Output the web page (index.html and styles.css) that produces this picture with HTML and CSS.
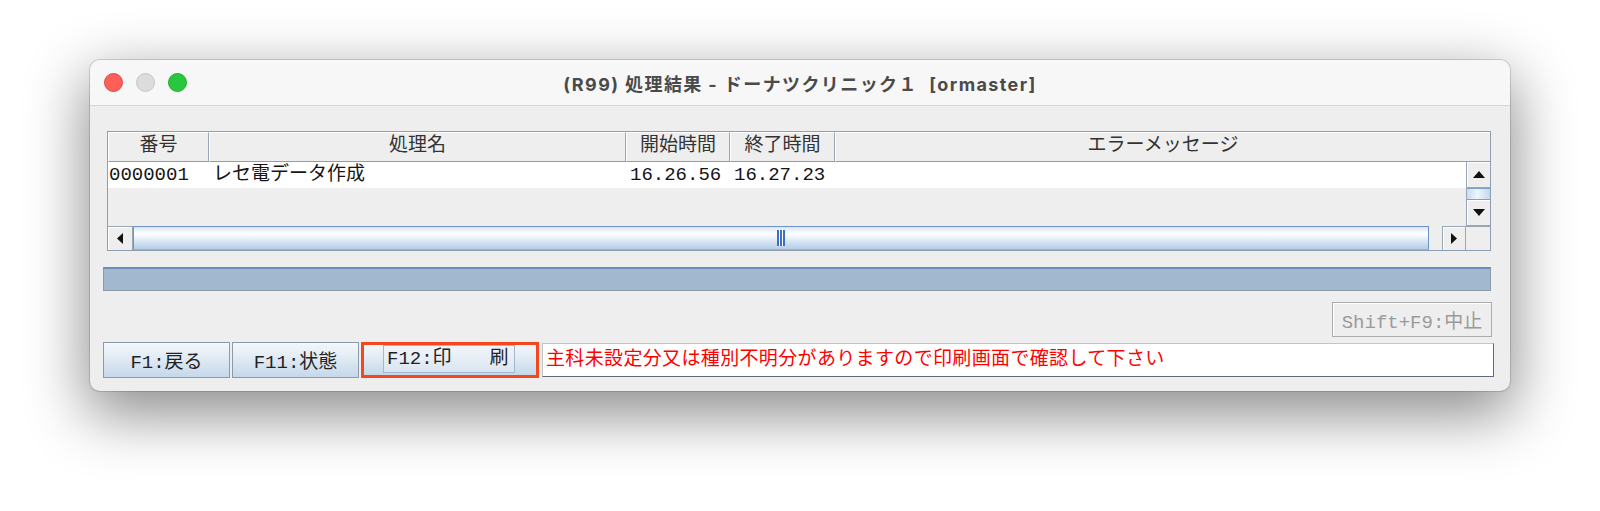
FILE: index.html
```html
<!DOCTYPE html>
<html lang="ja">

<head>
    <meta charset="UTF-8">
    <meta name="viewport" content="width=device-width, initial-scale=1.0">
    <title>処理結果</title>
    <link rel="stylesheet" href="styles.css">
</head>

<body>

    <div class="window">
        <div class="titlebar">
            <div class="lights">
                <span class="light red"></span>
                <span class="light grey"></span>
                <span class="light green"></span>
            </div>
            <div class="title">(R99) 処理結果 - ドーナツクリニック１&nbsp;&nbsp;[ormaster]</div>
            <div></div>
        </div>

        <div class="content">
            <div class="table">
                <div class="thead">
                    <div class="th col-no">番号</div>
                    <div class="th col-name">処理名</div>
                    <div class="th col-start">開始時間</div>
                    <div class="th col-end">終了時間</div>
                    <div class="th col-msg">エラーメッセージ</div>
                </div>
                <div class="tbody-wrap">
                    <div class="tbody">
                        <div class="row">
                            <div class="td col-no first">0000001</div>
                            <div class="td col-name">レセ電データ作成</div>
                            <div class="td col-start">16.26.56</div>
                            <div class="td col-end">16.27.23</div>
                            <div class="td col-msg"></div>
                        </div>
                    </div>
                    <div class="vscroll">
                        <div class="arrow-btn v-up">
                            <svg width="12" height="7" viewBox="0 0 12 7"><polygon points="0,7 6,0 12,7" fill="#111"/></svg>
                        </div>
                        <div class="v-thumb"></div>
                        <div class="arrow-btn v-down">
                            <svg width="12" height="7" viewBox="0 0 12 7"><polygon points="0,0 12,0 6,7" fill="#111"/></svg>
                        </div>
                    </div>
                </div>
                <div class="hscroll-row">
                    <div class="hscroll">
                        <div class="arrow-btn h-left">
                            <svg width="6" height="11" viewBox="0 0 6 11"><polygon points="6,0 6,11 0,5.5" fill="#111"/></svg>
                        </div>
                        <div class="h-thumb"><span class="grip"></span></div>
                        <div class="arrow-btn h-right">
                            <svg width="6" height="11" viewBox="0 0 6 11"><polygon points="0,0 6,5.5 0,11" fill="#111"/></svg>
                        </div>
                    </div>
                    <div class="corner"></div>
                </div>
            </div>

            <div class="progress"></div>

            <div class="stop-row">
                <button class="btn-stop" disabled>Shift+F9:中止</button>
            </div>

            <div class="fkeys">
                <button class="fkey">F1:戻る</button>
                <button class="fkey">F11:状態</button>
                <div class="fkey-focus">
                    <span class="focus-box">F12:印　　刷</span>
                </div>
                <div class="message">主科未設定分又は種別不明分がありますので印刷画面で確認して下さい</div>
            </div>
        </div>
    </div>

</body>

</html>
```

FILE: styles.css
```css
* {
    box-sizing: border-box;
}

body {
    margin: 0;
    min-height: 100vh;
    padding-top: 60px;
    background-color: #ffffff;
}

.window {
    width: 1420px;
    margin-left: 90px;
    background-color: #eeeeee;
    border-radius: 10px;
    overflow: hidden;
    box-shadow: 0 0 0 1px rgba(0, 0, 0, 0.14), 0 20px 60px 4px rgba(0, 0, 0, 0.45);
}

/* barra de titulo */
.titlebar {
    height: 46px;
    display: grid;
    grid-template-columns: 1fr auto 1fr;
    align-items: center;
    background-color: #f7f7f7;
    border-bottom: 1px solid #d6d6d6;
}

.lights {
    display: flex;
    gap: 13px;
    padding-left: 14px;
}

.light {
    width: 19px;
    height: 19px;
    border-radius: 50%;
}

.red {
    background-color: #fe5f57;
    border: 1px solid #e2463f;
}

.grey {
    background-color: #dcdcdc;
    border: 1px solid #c6c6c6;
}

.green {
    background-color: #29c740;
    border: 1px solid #1dad2b;
}

.title {
    font-family: 'Inter', 'Noto Sans CJK JP', sans-serif;
    font-weight: 700;
    font-size: 18px;
    letter-spacing: 1.4px;
    color: #4a4a4a;
    white-space: pre;
}

.content {
    padding: 25px 16px 13px 13px;
    font-family: 'Liberation Mono', 'Noto Sans CJK JP', monospace;
    font-size: 19px;
}

/* tabela */
.table {
    margin: 0 3px 0 4px;
    border: 1px solid #8e9eb0;
}

.thead {
    display: flex;
    height: 30px;
}

.th {
    text-align: center;
    line-height: 27px;
    color: #333333;
    border-top: 1px solid #ffffff;
    border-left: 1px solid #ffffff;
    border-right: 1px solid #98a6b6;
    border-bottom: 1px solid #8e9eb0;
}

.col-no {
    width: 101px;
}

.col-name {
    width: 417px;
}

.col-start {
    width: 104px;
}

.col-end {
    width: 105px;
}

.col-msg {
    flex: 1;
}

.thead .col-msg {
    border-right: none;
}

.tbody-wrap {
    display: flex;
    height: 64px;
}

.tbody {
    flex: 1;
}

.row {
    display: flex;
    height: 26px;
    background-color: #ffffff;
}

.td {
    padding-left: 4px;
    line-height: 26px;
    color: #151515;
    white-space: pre;
}

.td.first {
    padding-left: 1px;
}

.vscroll {
    width: 24px;
    display: flex;
    flex-direction: column;
    border-left: 1px solid #98a6b6;
}

.arrow-btn {
    display: flex;
    align-items: center;
    justify-content: center;
    background-color: #eeeeee;
    box-shadow: inset 1px 1px 0 #ffffff;
}

.v-up {
    height: 26px;
    border-bottom: 1px solid #98a6b6;
}

.v-thumb {
    height: 12px;
    background: linear-gradient(to right, #c9dcf0, #eef5fc 45%, #c3d7ec);
    border-top: 1px solid #7f9fc8;
    border-bottom: 1px solid #7f9fc8;
}

.v-down {
    height: 26px;
    border-bottom: 1px solid #98a6b6;
}

.hscroll-row {
    display: flex;
    height: 24px;
}

.hscroll {
    flex: 1;
    display: flex;
}

.h-left {
    width: 25px;
    border-right: 1px solid #98a6b6;
    border-top: 1px solid #98a6b6;
}

.h-thumb {
    flex: 1;
    margin-right: 13px;
    display: flex;
    align-items: center;
    justify-content: center;
    border: 1px solid #6d93c9;
    border-bottom-color: #9fb2c6;
    background: linear-gradient(to bottom, #d7e6f5 0%, #ffffff 30%, #e4eef8 55%, #c2d7ec 85%, #b7cde4 100%);
}

.grip {
    width: 8px;
    height: 16px;
    background: repeating-linear-gradient(to right, #3b6fc4 0 2px, #ffffff 2px 3px);
}

.h-right {
    width: 24px;
    border-left: 1px solid #98a6b6;
    border-right: 1px solid #98a6b6;
    border-top: 1px solid #98a6b6;
}

.corner {
    width: 24px;
    border-top: 1px solid #98a6b6;
}

/* barra de progresso */
.progress {
    margin: 16px 3px 0 0;
    height: 24px;
    background-color: #a1b8ce;
    border: 1px solid #8d99a6;
    border-top: 2px solid #6b8cb7;
}

.stop-row {
    display: flex;
    justify-content: flex-end;
    margin-top: 11px;
}

.btn-stop {
    width: 160px;
    height: 35px;
    margin-right: 2px;
    font-family: inherit;
    font-size: 19px;
    color: #9a9a9a;
    background-color: #eeeeee;
    border: 1px solid #acacac;
    box-shadow: inset 1px 1px 0 #ffffff;
    padding: 0;
}

/* botoes de funcao */
.fkeys {
    display: flex;
    margin-top: 5px;
    height: 36px;
}

.fkey {
    width: 127px;
    margin-right: 2px;
    font-family: inherit;
    font-size: 19px;
    color: #222222;
    padding: 0;
    border: 1px solid #8a9aab;
    background: linear-gradient(to bottom, #f3f7fb 0%, #e3ecf5 40%, #c5d8ea 100%);
}

.fkey-focus {
    width: 178px;
    margin-right: 3px;
    border: 3px solid #f4471d;
    display: flex;
    align-items: flex-start;
    padding-left: 19px;
    background: linear-gradient(to bottom, #f3f7fb 0%, #e3ecf5 40%, #c5d8ea 100%);
}

.focus-box {
    width: 132px;
    height: 28px;
    line-height: 26px;
    padding-left: 3px;
    color: #222222;
    white-space: pre;
    border: 1px solid #a4b7cb;
    background: linear-gradient(to bottom, #f1f5fa, #dbe6f1);
}

.message {
    flex: 1;
    margin-top: 1px;
    height: 34px;
    line-height: 32px;
    padding-left: 3px;
    color: #ff0000;
    letter-spacing: 0.35px;
    background-color: #ffffff;
    border: 1px solid #c4c4c4;
    border-right-color: #5d6d7e;
    border-bottom-color: #5d6d7e;
    white-space: nowrap;
    overflow: hidden;
}
```
